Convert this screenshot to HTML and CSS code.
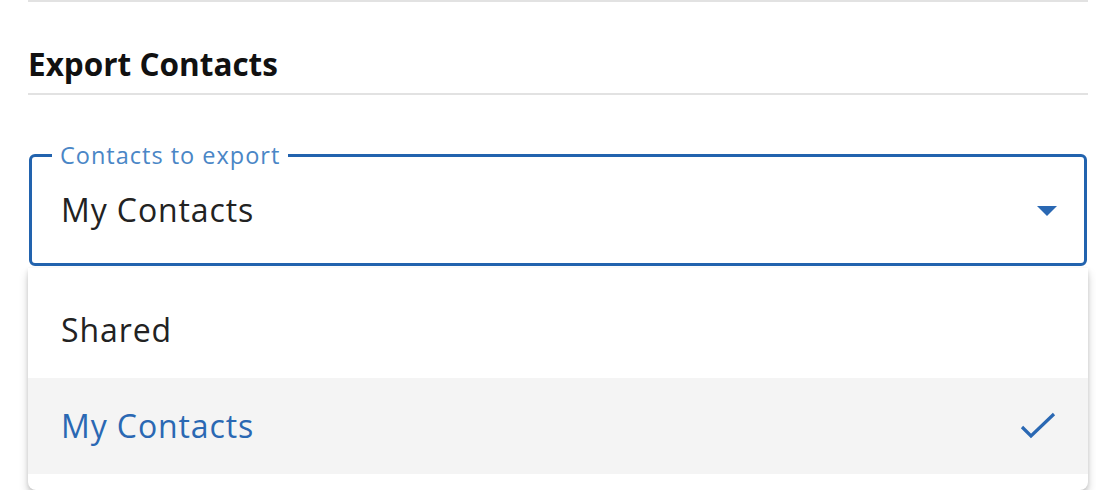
FILE: index.html
```html
<!DOCTYPE html>
<html>
<head>
<meta charset="utf-8">
<link rel="stylesheet" href="styles.css">
</head>
<body>
<div class="page">
  <div class="topline"></div>
  <h2 class="title">Export Contacts</h2>
  <div class="divider"></div>
  <div class="field">
    <fieldset class="outline">
      <legend class="label">Contacts to export</legend>
    </fieldset>
    <div class="value">My Contacts</div>
    <svg class="caret" width="20" height="10" viewBox="0 0 20 10"><path d="M0 0H20L10 10Z" fill="#2a68b3"/></svg>
  </div>
  <div class="menu">
    <div class="item">Shared</div>
    <div class="item selected">My Contacts
      <svg class="check" width="36" height="28" viewBox="0 0 36 28"><path d="M2 15L11 24L34 2" fill="none" stroke="#2a68b3" stroke-width="3.2"/></svg>
    </div>
  </div>
</div>
</body>
</html>
```
FILE: styles.css
```css
html, body { margin: 0; padding: 0; background: #fff; }
body { font-family: "Open Sans", "Noto Sans", sans-serif; }
.page { padding: 0 8px 0 28px; width: 1060px; }
.topline { height: 2px; background: #e2e2e2; }
.title { margin: 0; padding-top: 44px; height: 47px; font-size: 31.5px; font-weight: 700; color: #111; line-height: 36px; }
.divider { height: 2px; background: #e2e2e2; }
.field { position: relative; margin-top: 60px; height: 111px; }
.outline { position: absolute; inset: -10px 1px 0 1px; margin: 0; padding: 0 20px; border: 3px solid #2263ae; border-radius: 6px; }
.label { padding: 0 8px 0 8px; font-size: 23.5px; color: #4a86c6; line-height: 20px; letter-spacing: 1px; }
.value { position: absolute; left: 33px; top: 35px; font-size: 32px; color: #222; letter-spacing: 0.9px; line-height: 40px; }
.caret { position: absolute; right: 31px; top: 51px; }
.menu { position: relative; margin-top: 2px; padding: 14px 0 16px; background: #fff; border-radius: 0 0 8px 8px; box-shadow: 0 6px 10px rgba(0,0,0,0.18), 0 2px 4px rgba(0,0,0,0.12); }
.item { position: relative; height: 96px; display: flex; align-items: center; padding-left: 33px; font-size: 32px; color: #222; letter-spacing: 0.9px; line-height: 40px; }
.item.selected { background: #f4f4f4; color: #2a68b3; }
.check { position: absolute; right: 32px; top: 34px; }
```
